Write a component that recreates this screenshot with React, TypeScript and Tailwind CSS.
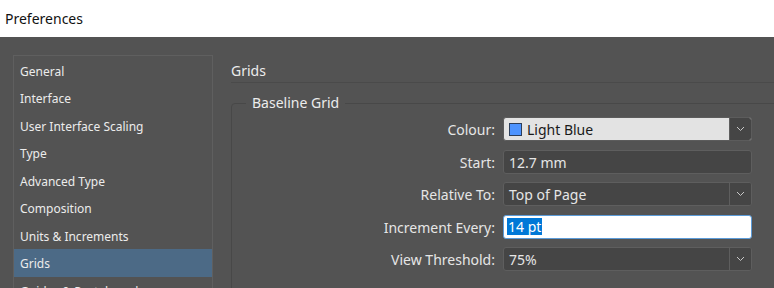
import React from "react";

const font = { fontFamily: '"Segoe UI", "Noto Sans", "Liberation Sans", sans-serif' };

const sections = [
  "General",
  "Interface",
  "User Interface Scaling",
  "Type",
  "Advanced Type",
  "Composition",
  "Units & Increments",
  "Grids",
  "Guides & Pasteboard",
];

function Chevron() {
  return (
    <svg width="9" height="6" viewBox="0 0 9 6" fill="none">
      <path d="M1 1 L4.5 4.5 L8 1" stroke="#c8c8c8" strokeWidth="1" />
    </svg>
  );
}

function Select({ value, light, swatch }: { value: string; light?: boolean; swatch?: boolean }) {
  return (
    <div
      className={`flex h-[24px] w-[249px] rounded-[3px] border overflow-hidden ${
        light ? "border-[#5c5c5c] bg-[#e3e3e3]" : "border-[#5e5e5e] bg-[#454545]"
      }`}
    >
      <div className={`flex flex-1 items-center gap-[5px] pl-[5px] pt-[1px] text-[14px] ${light ? "text-[#1a1a1a]" : "text-[#e6e6e6]"}`}>
        {swatch && <span className="h-[13px] w-[13px] border border-[#2c3e5a] bg-[#4e94ff]" />}
        {value}
      </div>
      <div className="flex w-[22px] items-center justify-center border-l border-[#5e5e5e] bg-[#454545]">
        <Chevron />
      </div>
    </div>
  );
}

export default function App() {
  return (
    <div className="h-[288px] w-[774px] overflow-hidden bg-[#535353]" style={font}>
      {/* Title bar */}
      <div className="flex h-[37px] items-center bg-white pl-[5px] text-[14px] text-[#111]">Preferences</div>

      <div className="flex pl-[13px] pt-[18px]">
        {/* Sidebar */}
        <div className="h-[260px] w-[200px] shrink-0 border border-[#5f5f5f] pt-[0.5px]">
          {sections.map((s) => (
            <div
              key={s}
              className={`flex h-[27.5px] items-center pl-[6px] pt-[3px] text-[12px] text-[#ececec] ${
                s === "Grids" ? "bg-[#4c6a86]" : ""
              }`}
            >
              {s}
            </div>
          ))}
        </div>

        {/* Panel */}
        <div className="ml-[18px] w-[560px] shrink-0 pt-[6px]">
          <div className="h-[22px] border-b border-[#4a4a4a] text-[14px] leading-[20px] text-[#ececec]">Grids</div>

          <fieldset className="mt-[10px] rounded-[4px] border border-[#484848] pb-[20px]">
            <legend className="ml-[14px] px-[6px] text-[14px] leading-[20px] text-[#ececec]">Baseline Grid</legend>
            <div className="grid grid-cols-[263px_249px] items-center gap-x-[8px] gap-y-[8.5px] pt-[4px] text-[14px] text-[#e6e6e6]">
              <div className="pt-[1px] text-right">Colour:</div>
              <Select value="Light Blue" light swatch />

              <div className="pt-[1px] text-right">Start:</div>
              <div className="flex h-[24px] w-[249px] items-center rounded-[3px] border border-[#5e5e5e] bg-[#454545] pl-[5px] pt-[1px]">
                12.7 mm
              </div>

              <div className="pt-[1px] text-right">Relative To:</div>
              <Select value="Top of Page" />

              <div className="pt-[1px] text-right">Increment Every:</div>
              <div className="flex h-[24px] w-[249px] items-center rounded-[3px] border border-[#5b9bd8] bg-white pl-[3px]">
                <span className="bg-[#0078d7] px-[1px] leading-[17px] text-white">14 pt</span>
              </div>

              <div className="pt-[1px] text-right">View Threshold:</div>
              <Select value="75%" />
            </div>
          </fieldset>
        </div>
      </div>
    </div>
  );
}
